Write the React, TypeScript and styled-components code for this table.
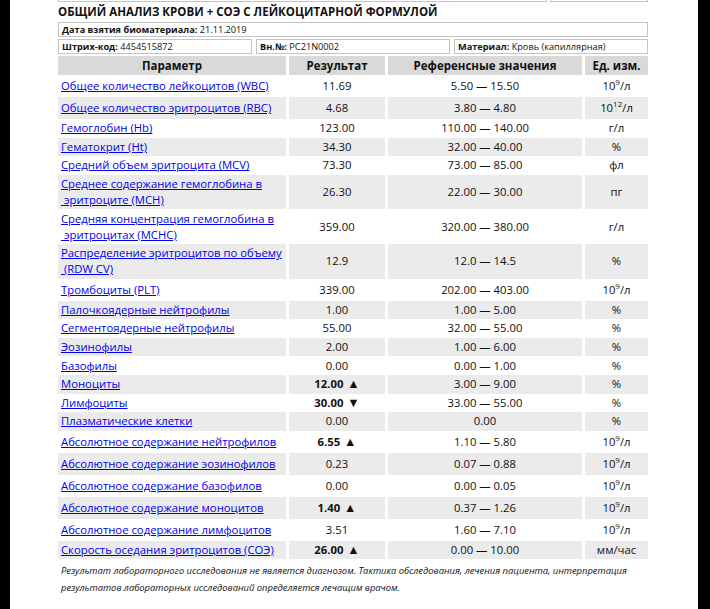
import React from 'react';
import styled, { createGlobalStyle } from 'styled-components';

const GlobalStyle = createGlobalStyle`
    html, body {
        margin: 0;
        padding: 0;
        background: #000;
    }
    body {
        font-family: 'Open Sans', 'Noto Sans', Arial, sans-serif;
        color: #111;
    }
`;

const Page = styled.div`
    margin: 0 12px 0 10px;
    background: #fff;
    height: 609px;
    padding: 0 50px 0 48px;
    box-sizing: border-box;
    overflow: hidden;
`;

const CutRow = styled.div`
    display: flex;
    gap: 3px;
    height: 2px;
    & > div {
        border: 1px solid #c4c4c4;
        border-top: none;
    }
    & > div:first-child {
        flex: 1;
    }
    & > div:last-child {
        width: 96px;
    }
`;

const Title = styled.h1`
    margin: 2px 0 2px;
    font-size: 11.5px;
    line-height: 16px;
    font-weight: 700;
    white-space: nowrap;
`;

const InfoRow = styled.div`
    display: flex;
    gap: 4px;
    margin-bottom: 2px;
`;

const InfoBox = styled.div`
    flex: 1;
    border: 1px solid #c4c4c4;
    font-size: 9.2px;
    line-height: 13px;
    padding: 0 3px;
    white-space: nowrap;
    b {
        font-weight: 700;
    }
`;

const Table = styled.table`
    border-collapse: separate;
    border-spacing: 3px 0;
    table-layout: fixed;
    width: calc(100% + 6px);
    margin: 2px -3px 0;
    font-size: 11.3px;
    line-height: 16px;
`;

const Th = styled.th`
    background: #d9d9d9;
    font-weight: 700;
    font-size: 11.5px;
    padding: 2px 3px 1px;
    text-align: center;
`;

const Row = styled.tr<{ $odd: boolean; $tall?: boolean }>`
    td {
        background: ${(p) => (p.$odd ? '#ebebeb' : '#fff')};
        padding: ${(p) => (p.$tall ? '3px 3px' : '1.3px 3px')};
    }
`;

const NameCell = styled.td`
    text-align: left;
    a {
        color: #0000ee;
        text-decoration: underline;
    }
`;

const Center = styled.td<{ $bold?: boolean }>`
    text-align: center;
    font-weight: ${(p) => (p.$bold ? 700 : 400)};
    white-space: nowrap;
    sup {
        font-size: 8px;
        line-height: 0;
        vertical-align: 5px;
    }
`;

const Arrow = styled.span`
    font-size: 12.5px;
    line-height: 0;
    margin-left: 4px;
`;

const Note = styled.p`
    margin: 3px 0 0 3px;
    font-size: 9.4px;
    line-height: 17px;
    font-style: italic;
    white-space: nowrap;
`;

type Item = {
    name: React.ReactNode;
    result: string;
    flag?: 'up' | 'down';
    ref: string;
    unit: React.ReactNode;
    tall?: boolean;
};

const g9 = (
    <>
        10<sup>9</sup>/л
    </>
);

const items: Item[] = [
    { name: 'Общее количество лейкоцитов (WBC)', result: '11.69', ref: '5.50 — 15.50', unit: g9, tall: true },
    {
        name: 'Общее количество эритроцитов (RBC)',
        result: '4.68',
        ref: '3.80 — 4.80',
        unit: (
            <>
                10<sup>12</sup>/л
            </>
        ),
        tall: true,
    },
    { name: 'Гемоглобин (Hb)', result: '123.00', ref: '110.00 — 140.00', unit: 'г/л' },
    { name: 'Гематокрит (Ht)', result: '34.30', ref: '32.00 — 40.00', unit: '%' },
    { name: 'Средний объем эритроцита (MCV)', result: '73.30', ref: '73.00 — 85.00', unit: 'фл' },
    {
        name: (
            <>
                Среднее содержание гемоглобина в<br />
                {'\u00a0'}эритроците (MCH)
            </>
        ),
        result: '26.30',
        ref: '22.00 — 30.00',
        unit: 'пг',
    },
    {
        name: (
            <>
                Средняя концентрация гемоглобина в<br />
                {'\u00a0'}эритроцитах (MCHC)
            </>
        ),
        result: '359.00',
        ref: '320.00 — 380.00',
        unit: 'г/л',
    },
    {
        name: (
            <>
                Распределение эритроцитов по объему<br />
                {'\u00a0'}(RDW CV)
            </>
        ),
        result: '12.9',
        ref: '12.0 — 14.5',
        unit: '%',
    },
    { name: 'Тромбоциты (PLT)', result: '339.00', ref: '202.00 — 403.00', unit: g9, tall: true },
    { name: 'Палочкоядерные нейтрофилы', result: '1.00', ref: '1.00 — 5.00', unit: '%' },
    { name: 'Сегментоядерные нейтрофилы', result: '55.00', ref: '32.00 — 55.00', unit: '%' },
    { name: 'Эозинофилы', result: '2.00', ref: '1.00 — 6.00', unit: '%' },
    { name: 'Базофилы', result: '0.00', ref: '0.00 — 1.00', unit: '%' },
    { name: 'Моноциты', result: '12.00', flag: 'up', ref: '3.00 — 9.00', unit: '%' },
    { name: 'Лимфоциты', result: '30.00', flag: 'down', ref: '33.00 — 55.00', unit: '%' },
    { name: 'Плазматические клетки', result: '0.00', ref: '0.00', unit: '%' },
    { name: 'Абсолютное содержание нейтрофилов', result: '6.55', flag: 'up', ref: '1.10 — 5.80', unit: g9, tall: true },
    { name: 'Абсолютное содержание эозинофилов', result: '0.23', ref: '0.07 — 0.88', unit: g9, tall: true },
    { name: 'Абсолютное содержание базофилов', result: '0.00', ref: '0.00 — 0.05', unit: g9, tall: true },
    { name: 'Абсолютное содержание моноцитов', result: '1.40', flag: 'up', ref: '0.37 — 1.26', unit: g9, tall: true },
    { name: 'Абсолютное содержание лимфоцитов', result: '3.51', ref: '1.60 — 7.10', unit: g9, tall: true },
    { name: 'Скорость оседания эритроцитов (СОЭ)', result: '26.00', flag: 'up', ref: '0.00 — 10.00', unit: 'мм/час' },
];

const App = () => {
    return (
        <>
            <GlobalStyle />
            <Page>
                <CutRow>
                    <div />
                    <div />
                </CutRow>
                <Title>ОБЩИЙ АНАЛИЗ КРОВИ + СОЭ С ЛЕЙКОЦИТАРНОЙ ФОРМУЛОЙ</Title>
                <InfoRow>
                    <InfoBox>
                        <b>Дата взятия биоматериала:</b> 21.11.2019
                    </InfoBox>
                </InfoRow>
                <InfoRow>
                    <InfoBox>
                        <b>Штрих-код:</b> 4454515872
                    </InfoBox>
                    <InfoBox>
                        <b>Вн.№:</b> PC21N0002
                    </InfoBox>
                    <InfoBox>
                        <b>Материал:</b> Кровь (капиллярная)
                    </InfoBox>
                </InfoRow>
                <Table>
                    <colgroup>
                        <col style={{ width: 228 }} />
                        <col style={{ width: 96 }} />
                        <col style={{ width: 194 }} />
                        <col style={{ width: 63 }} />
                    </colgroup>
                    <thead>
                        <tr>
                            <Th>Параметр</Th>
                            <Th>Результат</Th>
                            <Th>Референсные значения</Th>
                            <Th>Ед. изм.</Th>
                        </tr>
                    </thead>
                    <tbody>
                        {items.map((it, i) => (
                            <Row key={i} $odd={i % 2 === 1} $tall={it.tall}>
                                <NameCell>
                                    <a href="#">{it.name}</a>
                                </NameCell>
                                <Center $bold={!!it.flag}>
                                    {it.result}
                                    {it.flag === 'up' && <Arrow>▲</Arrow>}
                                    {it.flag === 'down' && <Arrow>▼</Arrow>}
                                </Center>
                                <Center>{it.ref}</Center>
                                <Center>{it.unit}</Center>
                            </Row>
                        ))}
                    </tbody>
                </Table>
                <Note>
                    Результат лабораторного исследования не является диагнозом. Тактика обследования, лечения
                    пациента, интерпретация
                    <br />
                    результатов лабораторных исследований определяется лечащим врачом.
                </Note>
            </Page>
        </>
    );
};

export default App;
